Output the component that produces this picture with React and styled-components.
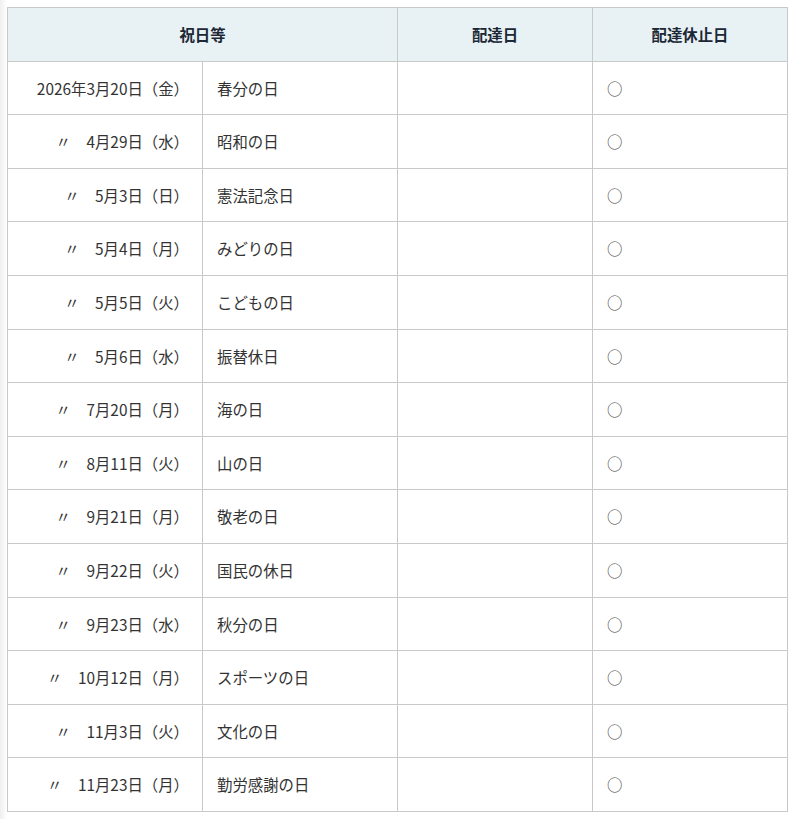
import React from "react";
import styled, { createGlobalStyle } from "styled-components";

const GlobalStyle = createGlobalStyle`
  html, body {
    margin: 0;
    padding: 0;
    background: linear-gradient(to right, #efefef 0px, #ffffff 7px) no-repeat, #ffffff;
    font-family: "Noto Sans CJK JP", "Noto Sans", sans-serif;
    color: #333333;
  }
`;

const holidays = [
  { date: "2026年3月20日（金）", name: "春分の日", first: true },
  { date: "4月29日（水）", name: "昭和の日" },
  { date: "5月3日（日）", name: "憲法記念日" },
  { date: "5月4日（月）", name: "みどりの日" },
  { date: "5月5日（火）", name: "こどもの日" },
  { date: "5月6日（水）", name: "振替休日" },
  { date: "7月20日（月）", name: "海の日" },
  { date: "8月11日（火）", name: "山の日" },
  { date: "9月21日（月）", name: "敬老の日" },
  { date: "9月22日（火）", name: "国民の休日" },
  { date: "9月23日（水）", name: "秋分の日" },
  { date: "10月12日（月）", name: "スポーツの日" },
  { date: "11月3日（火）", name: "文化の日" },
  { date: "11月23日（月）", name: "勤労感謝の日" },
];

const Page = styled.div`
  padding: 7px 10px 8px 7px;
`;

const Table = styled.table`
  width: 780px;
  border-collapse: collapse;
  table-layout: fixed;
  font-size: 15.4px;
  line-height: 22.6px;
`;

const HeadCell = styled.th`
  background: #e8f2f5;
  border: 1px solid #c9c9c9;
  padding: 15px;
  font-weight: 700;
  color: #1c2836;
  text-align: center;
`;

const Cell = styled.td`
  border: 1px solid #c9c9c9;
  padding: 15px 14px;
  text-align: ${(p) => p.$align || "left"};
  white-space: nowrap;
  ${(p) => p.$align === "right" && "padding-right: 13px;"}
`;

const Ditto = styled.span`
  color: #333333;
`;

const Mark = styled.span`
  color: #444444;
`;

export default function App() {
  return (
    <>
      <GlobalStyle />
      <Page>
        <Table>
          <colgroup>
            <col style={{ width: 195 }} />
            <col style={{ width: 195 }} />
            <col style={{ width: 195 }} />
            <col style={{ width: 195 }} />
          </colgroup>
          <thead>
            <tr>
              <HeadCell colSpan={2}>祝日等</HeadCell>
              <HeadCell>配達日</HeadCell>
              <HeadCell>配達休止日</HeadCell>
            </tr>
          </thead>
          <tbody>
            {holidays.map((h) => (
              <tr key={h.date}>
                <Cell $align="right">
                  {!h.first && <Ditto>〃　</Ditto>}
                  {h.date}
                </Cell>
                <Cell>{h.name}</Cell>
                <Cell />
                <Cell>
                  <Mark>○</Mark>
                </Cell>
              </tr>
            ))}
          </tbody>
        </Table>
      </Page>
    </>
  );
}
